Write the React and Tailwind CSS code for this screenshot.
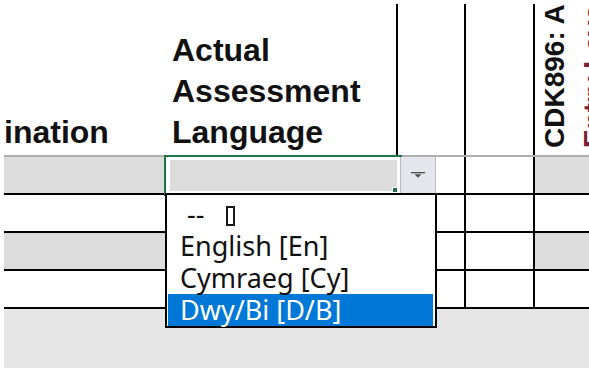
const HEAD_FONT = "font-['Liberation_Sans',Arial,sans-serif]";

function Caret() {
  return (
    <svg width="14" height="6" viewBox="0 0 14 6" aria-hidden>
      <rect x="0" y="0" width="14" height="1.3" fill="#4b4b4b" />
      <path d="M3.5 2.2 L10.5 2.2 L7 5.8 Z" fill="#4b4b4b" />
    </svg>
  );
}

function Tofu() {
  return <span className="ml-[22px] inline-block h-[20px] w-[9px] translate-y-[2px] border-2 border-[#1a1a1a]" />;
}

function DropdownList() {
  const items = ["English [En]", "Cymraeg [Cy]", "Dwy/Bi [D/B]"];
  return (
    <div className="absolute left-0 top-full z-10 h-[135px] w-[272px] border-2 border-black bg-white px-[1px] pt-[3px] font-['Noto_Sans',sans-serif] text-[27px] leading-[32px] text-[#111]">
      <div className="h-[32px] pl-[12px]">
        <span className="ml-[7px]">--</span>
        <Tofu />
      </div>
      {items.map((label, i) => (
        <div
          key={label}
          className={
            i === items.length - 1
              ? "mr-[1px] h-[32px] bg-[#0078d7] pl-[12px] text-white"
              : "h-[32px] pl-[12px]"
          }
        >
          {label}
        </div>
      ))}
    </div>
  );
}

function SelectedRow() {
  return (
    <div className="flex h-[40px] border-b-2 border-t-2 border-b-black border-t-[#b0b0b0]">
      <div className="w-[161px] bg-[#dcdcdc]" />
      <div className="relative w-[233px] bg-white">
        <div className="pointer-events-none absolute -left-[1px] -top-[2px] -bottom-[3px] w-[238px] border-l-2 border-t-2 border-[#217346]" />
        <div className="ml-[5px] mr-[1px] mt-[3px] h-[31px] bg-[#dcdcdc]" />
        <div className="absolute bottom-[0px] right-[0px] h-[6px] w-[6px] border border-white bg-[#217346]" />
        <DropdownList />
      </div>
      <div className="flex w-[68px] border-r-2 border-black bg-white pl-[2px]">
        <div className="flex w-[36px] items-center justify-center border-x border-[#b9bcc2] bg-[#e4e6eb]">
          <Caret />
        </div>
      </div>
      <div className="w-[69px] border-r-2 border-black bg-white" />
      <div className="w-[54px] bg-[#dcdcdc]" />
    </div>
  );
}

function BodyRow({ shaded }) {
  const fill = shaded ? "bg-[#dcdcdc]" : "bg-white";
  return (
    <div className="flex h-[38px] border-b-2 border-black">
      <div className={`w-[161px] ${fill}`} />
      <div className={`w-[233px] ${fill}`} />
      <div className="w-[68px] border-r-2 border-black bg-white" />
      <div className="w-[69px] border-r-2 border-black bg-white" />
      <div className={`w-[54px] ${fill}`} />
    </div>
  );
}

function HeaderRow() {
  return (
    <div className={`flex h-[151px] ${HEAD_FONT} text-[32px] font-bold leading-[41px] text-[#111]`}>
      <div className="flex w-[161px] items-end pb-[2px]">
        <div>ination</div>
      </div>
      <div className="flex w-[233px] items-end border-r-2 border-black pb-[2px] pl-[7px]">
        <div>
          Actual
          <br />
          Assessment
          <br />
          Language
        </div>
      </div>
      <div className="w-[68px] border-r-2 border-black" />
      <div className="w-[69px] border-r-2 border-black" />
      <div className="flex w-[54px] overflow-hidden">
        <div className="h-full shrink-0 rotate-180 whitespace-nowrap pt-[7px] text-[28px] leading-[39px] [writing-mode:vertical-rl]">
          CDK896: AS
          <br />
          <span className="text-[#7a1f3a]">Entry Level 3</span>
        </div>
      </div>
    </div>
  );
}

export default function App() {
  return (
    <div className="flex h-[370px] w-[589px] flex-col overflow-hidden bg-white pb-[2px] pl-[4px] pt-[4px]">
      <HeaderRow />
      <SelectedRow />
      <BodyRow shaded={false} />
      <BodyRow shaded />
      <BodyRow shaded={false} />
      <div className="flex-1 bg-[#e6e6e6]" />
    </div>
  );
}
